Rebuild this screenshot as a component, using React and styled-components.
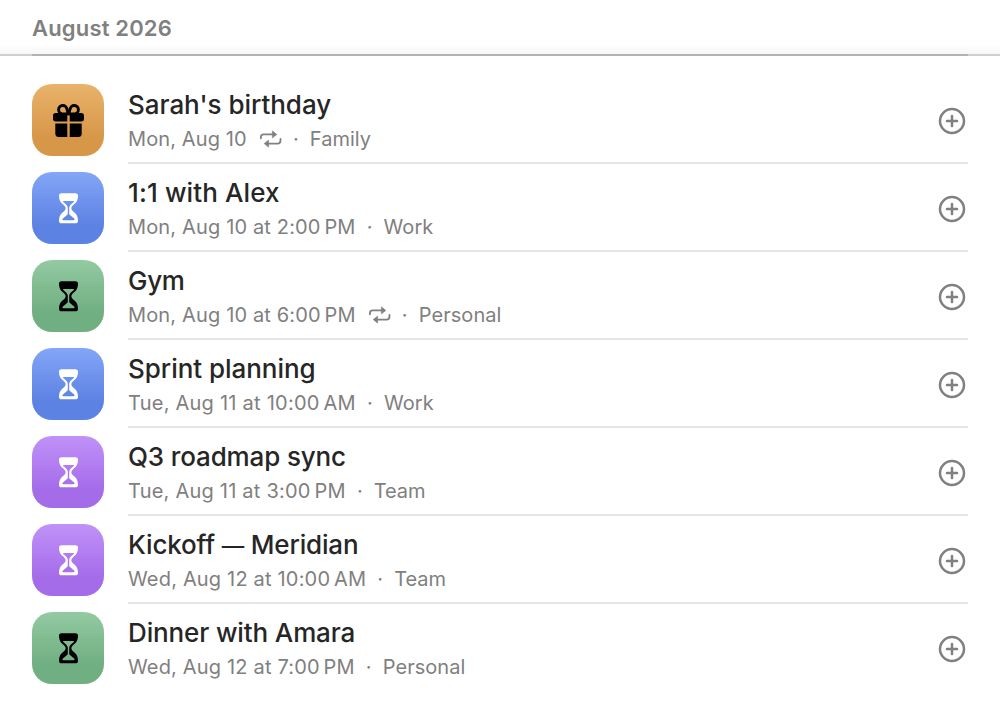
import React from "react";
import styled, { createGlobalStyle } from "styled-components";

const GlobalStyle = createGlobalStyle`
  * { box-sizing: border-box; }
  body {
    margin: 0;
    background: #fff;
    font-family: Inter, "Liberation Sans", sans-serif;
    -webkit-font-smoothing: antialiased;
  }
`;

const Page = styled.main`
  width: 1000px;
  height: 708px;
  background: #fff;
  overflow: hidden;
`;

const Header = styled.header`
  height: 56px;
  padding: 0 32px;
  background:
    linear-gradient(#b3b3b3, #b3b3b3) 32px 54px / 936px 2px no-repeat,
    linear-gradient(#d0d0d0, #d0d0d0) 0 54px / 100% 2px no-repeat,
    linear-gradient(#fff 44px, #f7f7f7 54px);
`;

const Month = styled.h1`
  margin: 0;
  font-size: 22px;
  line-height: 56px;
  font-weight: 600;
  letter-spacing: 0.17px;
  color: #808080;
`;

const List = styled.ul`
  list-style: none;
  margin: 0;
  padding: 20px 32px 0;
`;

const Row = styled.li`
  display: flex;
  gap: 24px;
  height: 88px;
  padding-top: 8px;
`;

const themes = {
  orange: ["#e9b36b", "#d79748", "#000"],
  blue: ["#84a6f8", "#5c82e3", "#fff"],
  green: ["#93caa2", "#70af81", "#000"],
  purple: ["#c092f8", "#a56cea", "#fff"],
};

const Tile = styled.div`
  flex: none;
  display: grid;
  place-items: center;
  width: 72px;
  height: 72px;
  border-radius: 20px;
  color: ${(p) => themes[p.$tone][2]};
  background: linear-gradient(
    ${(p) => themes[p.$tone][0]},
    ${(p) => themes[p.$tone][1]} 74%
  );
`;

const Body = styled.div`
  flex: 1;
  display: flex;
  justify-content: space-between;
  height: 80px;
  border-bottom: 2px solid ${(p) => (p.$last ? "transparent" : "#e5e5e5")};
`;

const Texts = styled.div`
  padding-top: 4px;
`;

const Title = styled.div`
  font-size: 26px;
  line-height: 34px;
  font-weight: 530;
  letter-spacing: ${(p) => p.$track}px;
  color: #262626;
  white-space: nowrap;
`;

const Dash = styled.span`
  font-size: 22.5px;
  line-height: 1;
`;

const Meta = styled.div`
  display: flex;
  align-items: center;
  font-size: 20px;
  line-height: 34px;
  color: #808080;
  white-space: pre;
`;

const When = styled.span`
  letter-spacing: ${(p) => p.$track}px;
`;

const Calendar = styled.span`
  letter-spacing: ${(p) => p.$track}px;
`;

const Dot = styled.span`
  width: 28px;
  text-align: center;
`;

const RepeatSlot = styled.span`
  display: flex;
  margin-left: 12px;
`;

const AddButton = styled.button`
  display: grid;
  place-items: center;
  align-self: flex-start;
  width: 32px;
  height: 32px;
  margin-top: 21px;
  padding: 0;
  border: 0;
  background: none;
  color: #808080;
`;

const Gift = () => (
  <svg width="32" height="36" viewBox="-.5 -.7 32 36" fill="currentColor">
    <g fill="none" stroke="currentColor" strokeWidth="2.9">
      <path d="M15.4 11.2h-5.2a4.2 4.2 0 1 1 4.3-4.6c.5 1.2.9 2.8.9 4.6z" />
      <path d="M16.6 11.2h5.2a4.2 4.2 0 1 0-4.3-4.6c-.5 1.2-.9 2.8-.9 4.6z" />
    </g>
    <path d="M3.200 10.400H14.800V18.700H3.200A2.700 2.700 0 0 1 .5 16V13.100A2.700 2.700 0 0 1 3.200 10.400z" />
    <path d="M17.200 10.400H28.800A2.700 2.700 0 0 1 31.500 13.100V16A2.700 2.700 0 0 1 28.800 18.700H17.200z" />
    <path d="M2.800 20.700H14.800V34.400H6.300A3.500 3.500 0 0 1 2.800 30.900z" />
    <path d="M17.200 20.700H29.200V30.900A3.500 3.500 0 0 1 25.700 34.400H17.200z" />
  </svg>
);

const Hourglass = () => (
  <svg width="20" height="32" viewBox="-.5 -.3 20 32" fill="currentColor">
    <path
      fillRule="evenodd"
      d="M2.900 1H17.100C18.500 1 19.500 1.900 19.500 3.300C19.500 8.300 17.600 10.400 15.400 12.300C13.600 13.900 12.900 14.700 12.900 16C12.900 17.300 13.600 18.100 15.400 19.700C17.600 21.600 19.500 23.700 19.500 28.700C19.500 30.100 18.500 31 17.100 31H2.900C1.500 31 .5 30.100 .5 28.700C.5 23.700 2.400 21.600 4.600 19.700C6.400 18.100 7.100 17.300 7.100 16C7.100 14.700 6.400 13.900 4.600 12.300C2.400 10.400 .5 8.300 .5 3.300C.5 1.900 1.500 1 2.900 1z
      M4.200 8.700C4.800 9.800 5.500 10.400 6.500 11.200C8.700 13.100 9.300 14.300 9.300 16V21.400C9.300 22 9 22.400 8.500 22.800L4.400 26.300C3.500 27.200 3.900 28 4.900 28H15.100C16.100 28 16.500 27.200 15.600 26.300L11.500 22.800C11 22.400 10.700 22 10.700 21.400V16C10.700 14.300 11.300 13.100 13.500 11.200C14.500 10.400 15.200 9.800 15.800 8.700z"
    />
  </svg>
);

const Repeat = () => (
  <svg width="23" height="20" viewBox="0 0 23 20" fill="none" stroke="currentColor" strokeWidth="1.8" strokeLinecap="round">
    <path d="M1.900 9.300V8.200Q1.900 5.400 4.700 5.400H14" />
    <path d="M21.500 9.900V11.200Q21.500 14.600 18.500 14.600H9.500" />
    <path d="M13.700 2.200L17.700 5.400L13.700 8.600zM9.300 11.400L5.300 14.600L9.300 17.800z" fill="currentColor" strokeWidth=".8" strokeLinejoin="round" />
  </svg>
);

const Plus = () => (
  <svg width="28" height="28" viewBox="0 0 28 28" fill="none" stroke="currentColor" strokeWidth="2.5" strokeLinecap="round">
    <circle cx="14" cy="14" r="12" />
    <path d="M9 14h10M14 9v10" />
  </svg>
);

const events = [
  { title: "Sarah's birthday", titleTrack: -0.04, when: "Mon, Aug 10", whenTrack: 0.12, repeat: true, calendar: "Family", calTrack: 0, tone: "orange", gift: true },
  { title: "1:1 with Alex", titleTrack: 0.12, when: "Mon, Aug 10 at 2:00\u202fPM", whenTrack: 0.15, calendar: "Work", calTrack: 0.1, tone: "blue" },
  { title: "Gym", titleTrack: -0.3, when: "Mon, Aug 10 at 6:00\u202fPM", whenTrack: 0.15, repeat: true, calendar: "Personal", calTrack: 0.05, tone: "green" },
  { title: "Sprint planning", titleTrack: -0.04, when: "Tue, Aug 11 at 10:00\u202fAM", whenTrack: 0.24, calendar: "Work", calTrack: 0.1, tone: "blue" },
  { title: "Q3 roadmap sync", titleTrack: -0.14, when: "Tue, Aug 11 at 3:00\u202fPM", whenTrack: 0.22, calendar: "Team", calTrack: -0.1, tone: "purple" },
  { title: ["Kickoff ", "—", " Meridian"], titleTrack: -0.17, when: "Wed, Aug 12 at 10:00\u202fAM", whenTrack: 0.18, calendar: "Team", calTrack: -0.1, tone: "purple" },
  { title: "Dinner with Amara", titleTrack: -0.13, when: "Wed, Aug 12 at 7:00\u202fPM", whenTrack: 0.17, calendar: "Personal", calTrack: 0.05, tone: "green" },
];

const TitleText = ({ value }) =>
  Array.isArray(value) ? (
    <>
      {value[0]}
      <Dash>{value[1]}</Dash>
      {value[2]}
    </>
  ) : (
    value
  );

export default function App() {
  return (
    <Page>
      <GlobalStyle />
      <Header>
        <Month>August 2026</Month>
      </Header>
      <List>
        {events.map((e, i) => (
          <Row key={i}>
            <Tile $tone={e.tone}>{e.gift ? <Gift /> : <Hourglass />}</Tile>
            <Body $last={i === events.length - 1}>
              <Texts>
                <Title $track={e.titleTrack}>
                  <TitleText value={e.title} />
                </Title>
                <Meta>
                  <When $track={e.whenTrack}>{e.when}</When>
                  {e.repeat && (
                    <RepeatSlot>
                      <Repeat />
                    </RepeatSlot>
                  )}
                  <Dot>·</Dot>
                  <Calendar $track={e.calTrack}>{e.calendar}</Calendar>
                </Meta>
              </Texts>
              <AddButton aria-label="Add">
                <Plus />
              </AddButton>
            </Body>
          </Row>
        ))}
      </List>
    </Page>
  );
}
